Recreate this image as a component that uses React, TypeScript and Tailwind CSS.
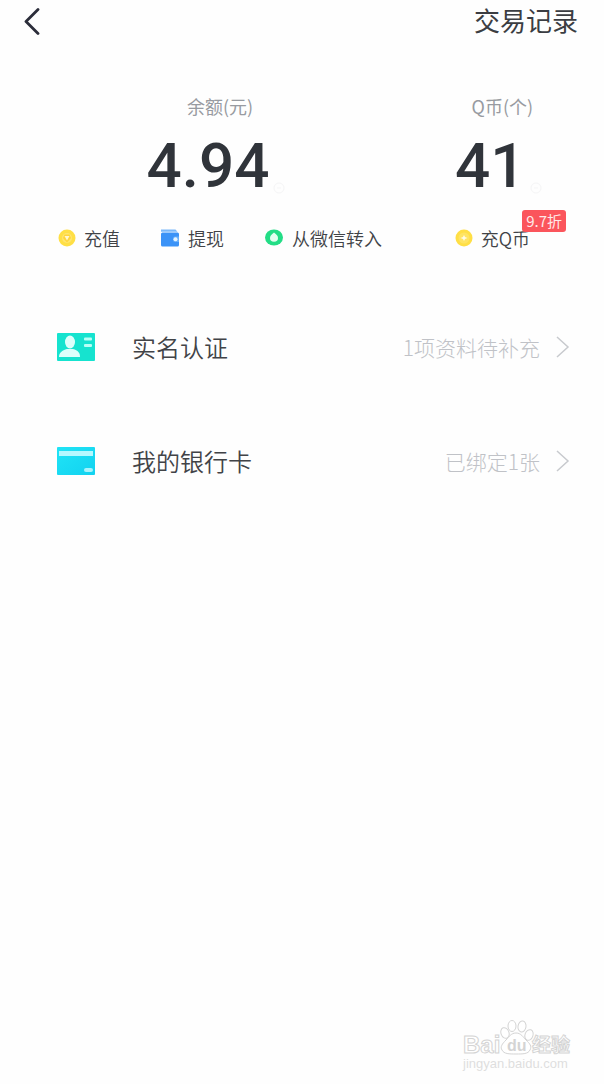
import React from "react";

type Row = {
  title: string;
  hint: string;
  icon: React.ReactNode;
};

function CoinIcon() {
  return (
    <svg width="18" height="18" viewBox="0 0 18 18">
      <circle cx="9" cy="9" r="8.5" fill="#ffdf45" />
      <circle cx="9" cy="9" r="5" fill="#ffe570" />
      <path d="M6.500 5.500h5L13 9l-4 4.500L5 9z" fill="#ffd53a" />
      <path d="M6.500 7h5L9 11.500z" fill="#fff6cf" />
    </svg>
  );
}

function WalletIcon() {
  return (
    <svg width="20" height="18" viewBox="0 0 20 18">
      <path d="M1 .5h14.500l2 2.200H1z" fill="#7ab8fa" />
      <rect x="1" y="3.500" width="18" height="14" rx="1.500" fill="#3b93f7" />
      <path d="M19 7.500h-4a2 2 0 0 0-2 2v1.500a2 2 0 0 0 2 2h4z" fill="#68b0fc" />
      <circle cx="15.500" cy="10.300" r="2" fill="#e4f4ff" />
    </svg>
  );
}

function WechatIcon() {
  return (
    <svg width="20" height="18" viewBox="0 0 20 18">
      <ellipse cx="10" cy="8.500" rx="9" ry="8" fill="#23dd86" />
      <path d="M10 3.500c2 1.400 4 3.200 4 5.500a4 3.800 0 0 1-8 0c0-2.300 2-4.100 4-5.500z" fill="#e2fff0" />
    </svg>
  );
}

function QCoinIcon() {
  return (
    <svg width="18" height="18" viewBox="0 0 18 18">
      <circle cx="9" cy="9" r="8.500" fill="#ffdf45" />
      <circle cx="9" cy="9" r="5.500" fill="#ffe462" />
      <path d="M9 6l1 2 2.500 1-2.500 1-1 2-1-2-2.500-1L8 8z" fill="#fffbe6" />
    </svg>
  );
}

function IdIcon() {
  return (
    <svg width="40" height="30" viewBox="0 0 40 30">
      <rect x="1" y="1" width="38" height="28" rx="1" fill="#16e3cf" />
      <ellipse cx="14" cy="10" rx="5" ry="6.500" fill="#dcfffb" />
      <path d="M3 25c0-4.500 3-6.500 8-8h6c5 1.500 7 3.500 7 8z" fill="#dcfffb" />
      <rect x="28" y="5.500" width="8" height="3" rx="1" fill="#b8fff6" />
      <rect x="28" y="12" width="8" height="3" rx="1" fill="#b8fff6" />
    </svg>
  );
}

function CardIcon() {
  return (
    <svg width="40" height="30" viewBox="0 0 40 30">
      <defs>
        <linearGradient id="card" x1="0" y1="0" x2="1" y2="1">
          <stop offset="0" stopColor="#20e4f6" />
          <stop offset="1" stopColor="#12d2f0" />
        </linearGradient>
      </defs>
      <rect x="1" y="1" width="38" height="28" rx="1" fill="url(#card)" />
      <rect x="3" y="5" width="34" height="5" fill="#b4f8ff" />
      <rect x="28" y="22" width="9" height="4" rx="2" fill="#a5f3fc" />
    </svg>
  );
}

function InfoIcon() {
  return (
    <svg width="12" height="12" viewBox="0 0 12 12" fill="none" stroke="#f5f5f6">
      <circle cx="6" cy="6" r="5" />
      <path d="M4 6h4" />
    </svg>
  );
}

function Watermark() {
  return (
    <svg width="112" height="56" viewBox="0 0 112 56" fill="#fff" stroke="#d4d4d4" fontFamily="Liberation Sans, Noto Sans CJK SC, sans-serif">
      <text x="1" y="33" fontSize="24" fontWeight="700">Bai</text>
      <ellipse cx="43" cy="13" rx="4" ry="5.500" transform="rotate(-20 43 13)" />
      <ellipse cx="50" cy="6" rx="4" ry="5.500" />
      <ellipse cx="60" cy="6.500" rx="4" ry="5.500" transform="rotate(10 60 6.500)" />
      <ellipse cx="67" cy="15" rx="4" ry="5.500" transform="rotate(20 67 15)" />
      <path d="M54 13c5 0 7 4 10 7 4 4 6 6 4 10-2 4-7 4-14 4s-12 0-14-4c-2-3 0-6 4-10 3-3 5-7 10-7z" />
      <text x="45" y="31" fontSize="16" fontWeight="700" fill="#d4d4d4" stroke="none">du</text>
      <text x="70" y="32" fontSize="19" fontWeight="700">经验</text>
      <text x="1" y="48" fontSize="13" fill="#dedede" stroke="none">jingyan.baidu.com</text>
    </svg>
  );
}

const rows: Row[] = [
  { title: "实名认证", hint: "1项资料待补充", icon: <IdIcon /> },
  { title: "我的银行卡", hint: "已绑定1张", icon: <CardIcon /> },
];

const actions = [
  { label: "充值", icon: <CoinIcon /> },
  { label: "提现", icon: <WalletIcon /> },
  { label: "从微信转入", icon: <WechatIcon /> },
];

function Amount({ label, value }: { label: string; value: string }) {
  return (
    <div className="flex flex-col items-center">
      <p className="text-[18px] leading-6 text-[#989ba1]">{label}</p>
      <div className="mt-3 mr-2 flex items-end gap-1">
        <span className="font-['Roboto',sans-serif] text-[62px] leading-[72px] font-medium text-[#30343a]">
          {value}
        </span>
        <span className="mb-2"><InfoIcon /></span>
      </div>
    </div>
  );
}

export default function App() {
  return (
    <div className="flex min-h-screen flex-col bg-[#fefefe] font-['Noto_Sans_CJK_SC',sans-serif] text-[#414347]">
      <header className="flex h-10 items-center justify-between pr-[26px] pl-5">
        <button aria-label="返回">
          <svg width="24" height="30" viewBox="0 0 24 30" fill="none" stroke="#2b2d3a" strokeWidth="2.800" strokeLinecap="round" strokeLinejoin="round">
            <path d="M18 4.500L6 16.500l12 12" />
          </svg>
        </button>
        <button className="text-[26px] leading-8 text-[#3b3d42]">交易记录</button>
      </header>

      <section className="mt-[54px] flex justify-between pr-[54px] pl-[58px]">
        <div>
          <Amount label="余额(元)" value="4.94" />
          <div className="mt-6 flex gap-10">
            {actions.map((a) => (
              <button key={a.label} className="flex items-center gap-2 text-[18px] leading-6 font-[350]">
                {a.icon}
                {a.label}
              </button>
            ))}
          </div>
        </div>
        <div>
          <Amount label="Q币(个)" value="41" />
          <button className="relative mt-6 flex items-center gap-2 pr-5 text-[18px] leading-6 font-[350]">
            <QCoinIcon />
            充Q币
            <span className="absolute -top-4 right-[-16px] rounded-[3px] bg-[#fb555c] px-1 text-[15px] leading-[22px] font-normal text-[#ffe8e8]">
              9.7折
            </span>
          </button>
        </div>
      </section>

      <ul className="mt-10">
        {rows.map((r) => (
          <li key={r.title}>
            <button className="flex h-[114px] w-full items-center pr-8 pl-14 text-left">
              {r.icon}
              <span className="ml-9 flex-1 text-[24px] leading-8 font-[350]">{r.title}</span>
              <span className="text-[21px] leading-8 font-light text-[#c0c2c7]">{r.hint}</span>
              <svg className="ml-3" width="20" height="24" viewBox="0 0 20 24" fill="none" stroke="#c8cace" strokeWidth="1.500">
                <path d="M5 2l11 10L5 22" />
              </svg>
            </button>
          </li>
        ))}
      </ul>

      <footer className="mt-auto flex justify-end pr-[30px] pb-2">
        <Watermark />
      </footer>
    </div>
  );
}
